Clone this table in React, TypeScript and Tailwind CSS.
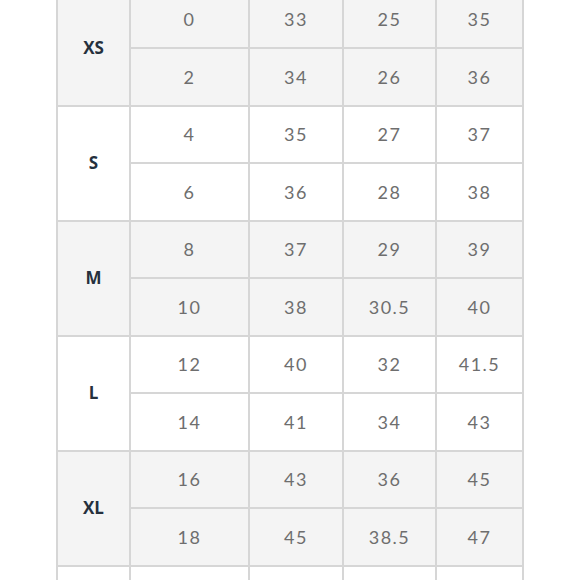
const groups = [
  { size: "XS", rows: [["0", "33", "25", "35"], ["2", "34", "26", "36"]] },
  { size: "S", rows: [["4", "35", "27", "37"], ["6", "36", "28", "38"]] },
  { size: "M", rows: [["8", "37", "29", "39"], ["10", "38", "30.5", "40"]] },
  { size: "L", rows: [["12", "40", "32", "41.5"], ["14", "41", "34", "43"]] },
  { size: "XL", rows: [["16", "43", "36", "45"], ["18", "45", "38.5", "47"]] },
  // next group starts at the bottom edge; only its top shows
  { size: "", rows: [["", "", "", ""], ["", "", "", ""]] },
];

export default function App() {
  return (
    <div className="w-[580px] h-[580px] overflow-hidden bg-white">
      <div
        className="ml-[56px] mt-[-10.5px] w-[468px] border-2 border-[#d6d6d6] bg-[#d6d6d6] grid grid-cols-[71px_117px_92px_91px_85px] auto-rows-[55.5px] gap-[2px]"
        style={{ fontFamily: "Lato, 'Open Sans', sans-serif" }}
      >
        {groups.map((g, gi) => {
          const bg = gi % 2 === 0 ? "bg-[#f4f4f4]" : "bg-white";
          return [
            <div
              key={`g${gi}`}
              className={`${bg} row-span-2 flex items-center justify-center text-[17px] font-bold text-[#25303d]`}
              style={{ fontFamily: "'Open Sans', sans-serif" }}
            >
              {g.size}
            </div>,
            ...g.rows.flatMap((r, ri) =>
              r.map((v, ci) => (
                <div
                  key={`${gi}-${ri}-${ci}`}
                  className={`${bg} flex items-center justify-center pt-[1px] text-[18px] tracking-[1.5px] text-[#6e6e6e]`}
                >
                  {v}
                </div>
              ))
            ),
          ];
        })}
      </div>
    </div>
  );
}
